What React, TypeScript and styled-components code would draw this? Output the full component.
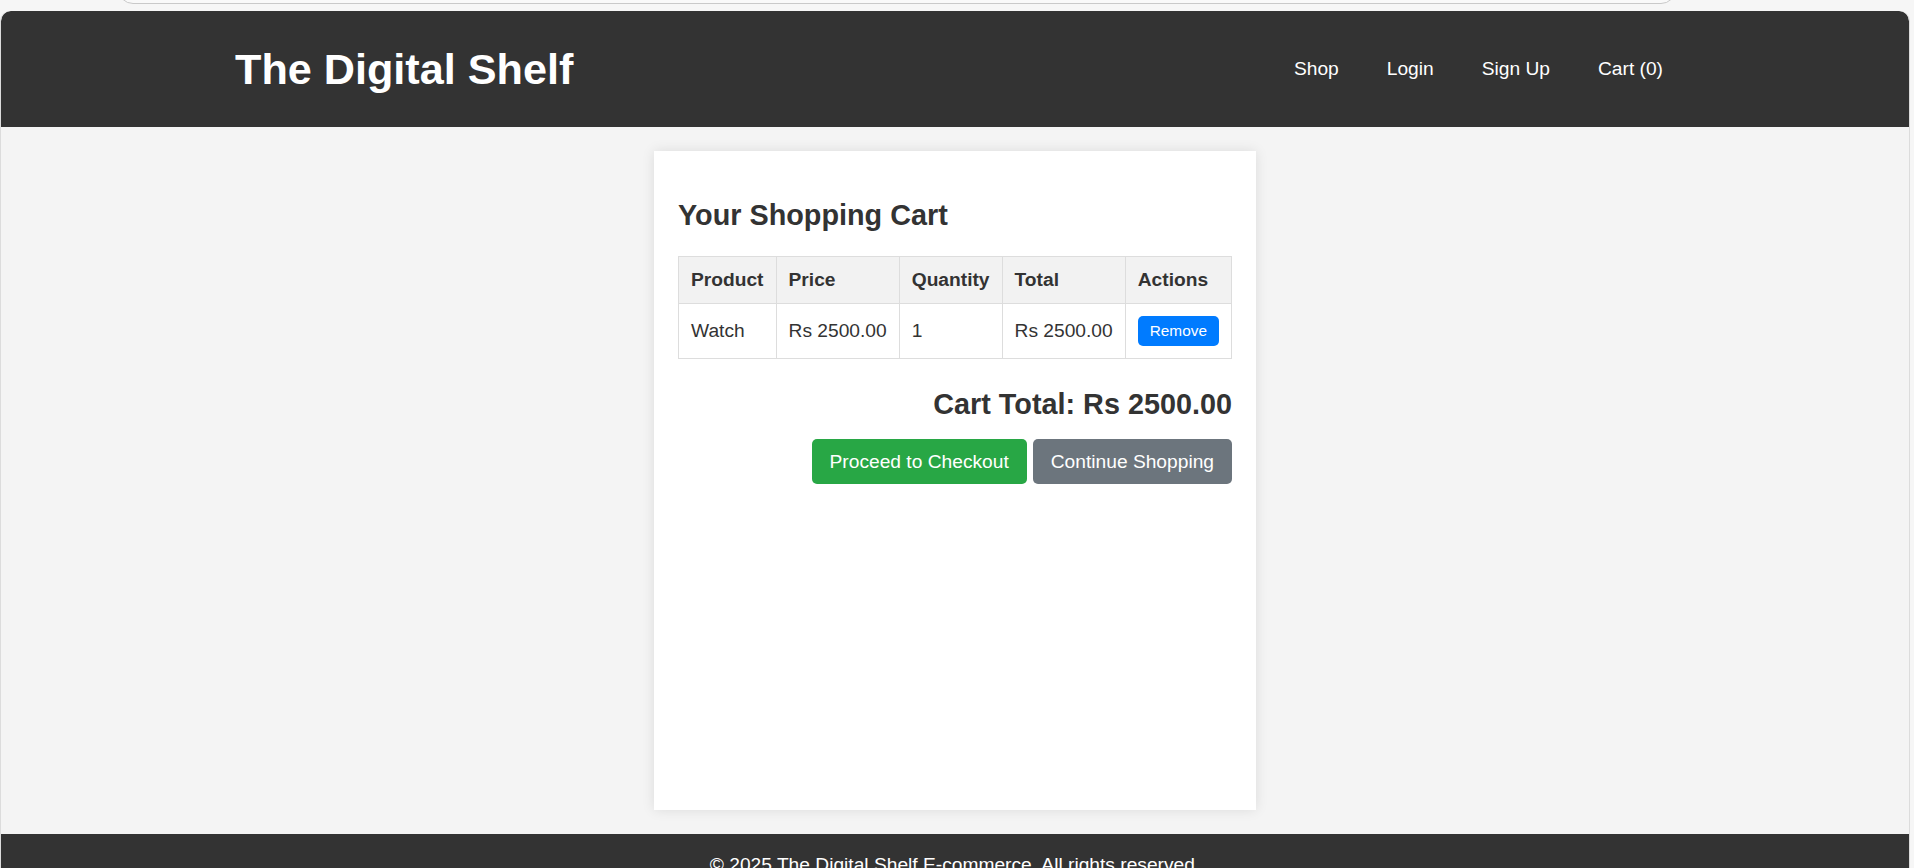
import React from "react";
import styled, { createGlobalStyle } from "styled-components";

const GlobalStyle = createGlobalStyle`
  html, body {
    margin: 0;
    padding: 0;
    background: #f6f6f6;
    overflow: hidden;
  }
  body {
    font-family: "Liberation Sans", Arial, Helvetica, sans-serif;
    color: #333;
  }
  * { box-sizing: border-box; }
`;

const Page = styled.div`
  width: 1914px;
  height: 868px;
  overflow: hidden;
`;

const TopStrip = styled.div`
  height: 11px;
  padding-left: 118px;
  overflow: hidden;
`;

const AddressBar = styled.div`
  width: 1558px;
  height: 30px;
  margin-top: -26px;
  border: 1px solid #c9c9c9;
  border-radius: 16px;
  background: #f9f9f9;
`;

const Window = styled.div`
  width: 1910px;
  border-left: 1px solid #dcdcdc;
  border-right: 1px solid #dcdcdc;
  border-radius: 10px 10px 0 0;
  overflow: hidden;
  background: #f4f4f4;
`;

const Header = styled.header`
  height: 116px;
  background: #333;
  color: #fff;
  border-radius: 10px 10px 0 0;
`;

const HeaderInner = styled.div`
  width: 1440px;
  height: 100%;
  margin: 0 auto;
  display: flex;
  align-items: center;
  justify-content: space-between;
`;

const Logo = styled.h1`
  margin: 0;
  font-size: 43.2px;
  font-weight: bold;
  color: #fff;
`;

const Nav = styled.nav`
  display: flex;
  align-items: center;
`;

const NavLink = styled.a`
  color: #fff;
  text-decoration: none;
  font-size: 19.2px;
  padding: 0 12px;
  margin-left: 24px;
`;

const Main = styled.main`
  display: flex;
  justify-content: center;
  padding: 24px 0;
`;

const Card = styled.section`
  width: 602px;
  height: 659px;
  padding: 24px;
  background: #fff;
  box-shadow: 0 0 12px rgba(0, 0, 0, 0.1);
`;

const Title = styled.h2`
  margin: 24px 0;
  font-size: 28.8px;
  font-weight: bold;
  color: #333;
`;

const Table = styled.table`
  width: 100%;
  border-collapse: collapse;
  font-size: 19.2px;
`;

const Th = styled.th`
  background: #f2f2f2;
  border: 1px solid #ddd;
  padding: 12px;
  text-align: left;
  font-weight: bold;
  color: #333;
  white-space: nowrap;
`;

const Td = styled.td`
  border: 1px solid #ddd;
  padding: 12px;
  text-align: left;
  color: #333;
  white-space: nowrap;
`;

const SmallButton = styled.button`
  font-family: inherit;
  font-size: 15.36px;
  line-height: 18px;
  padding: 6px 12px;
  color: #fff;
  background: #007bff;
  border: none;
  border-radius: 5px;
  cursor: pointer;
`;

const CartTotal = styled.h3`
  margin: 29px 0 18px;
  text-align: right;
  font-size: 28.8px;
  font-weight: bold;
  color: #333;
`;

const Actions = styled.div`
  display: flex;
  justify-content: flex-end;
  gap: 6px;
`;

const ActionButton = styled.button<{ $variant: "success" | "secondary" }>`
  font-family: inherit;
  font-size: 19.2px;
  line-height: 21px;
  padding: 12px 18px;
  color: #fff;
  background: ${(p) => (p.$variant === "success" ? "#28a745" : "#6c757d")};
  border: none;
  border-radius: 5px;
  cursor: pointer;
`;

const Footer = styled.footer`
  background: #333;
  color: #fff;
  text-align: center;
  padding: 20px;
  font-size: 19.2px;
`;

const FooterText = styled.p`
  margin: 0;
`;

const items = [{ name: "Watch", price: 2500, qty: 1 }];

export default function App() {
  const total = items.reduce((s, i) => s + i.price * i.qty, 0);
  return (
    <Page>
      <GlobalStyle />
      <TopStrip>
        <AddressBar />
      </TopStrip>
      <Window>
        <Header>
          <HeaderInner>
            <Logo>The Digital Shelf</Logo>
            <Nav>
              <NavLink href="#">Shop</NavLink>
              <NavLink href="#">Login</NavLink>
              <NavLink href="#">Sign Up</NavLink>
              <NavLink href="#">Cart (0)</NavLink>
            </Nav>
          </HeaderInner>
        </Header>
        <Main>
          <Card>
            <Title>Your Shopping Cart</Title>
            <Table>
              <thead>
                <tr>
                  <Th>Product</Th>
                  <Th>Price</Th>
                  <Th>Quantity</Th>
                  <Th>Total</Th>
                  <Th>Actions</Th>
                </tr>
              </thead>
              <tbody>
                {items.map((it) => (
                  <tr key={it.name}>
                    <Td>{it.name}</Td>
                    <Td>Rs {it.price.toFixed(2)}</Td>
                    <Td>{it.qty}</Td>
                    <Td>Rs {(it.price * it.qty).toFixed(2)}</Td>
                    <Td>
                      <SmallButton>Remove</SmallButton>
                    </Td>
                  </tr>
                ))}
              </tbody>
            </Table>
            <CartTotal>Cart Total: Rs {total.toFixed(2)}</CartTotal>
            <Actions>
              <ActionButton $variant="success">Proceed to Checkout</ActionButton>
              <ActionButton $variant="secondary">Continue Shopping</ActionButton>
            </Actions>
          </Card>
        </Main>
        <Footer>
          <FooterText>© 2025 The Digital Shelf E-commerce. All rights reserved.</FooterText>
        </Footer>
      </Window>
    </Page>
  );
}
